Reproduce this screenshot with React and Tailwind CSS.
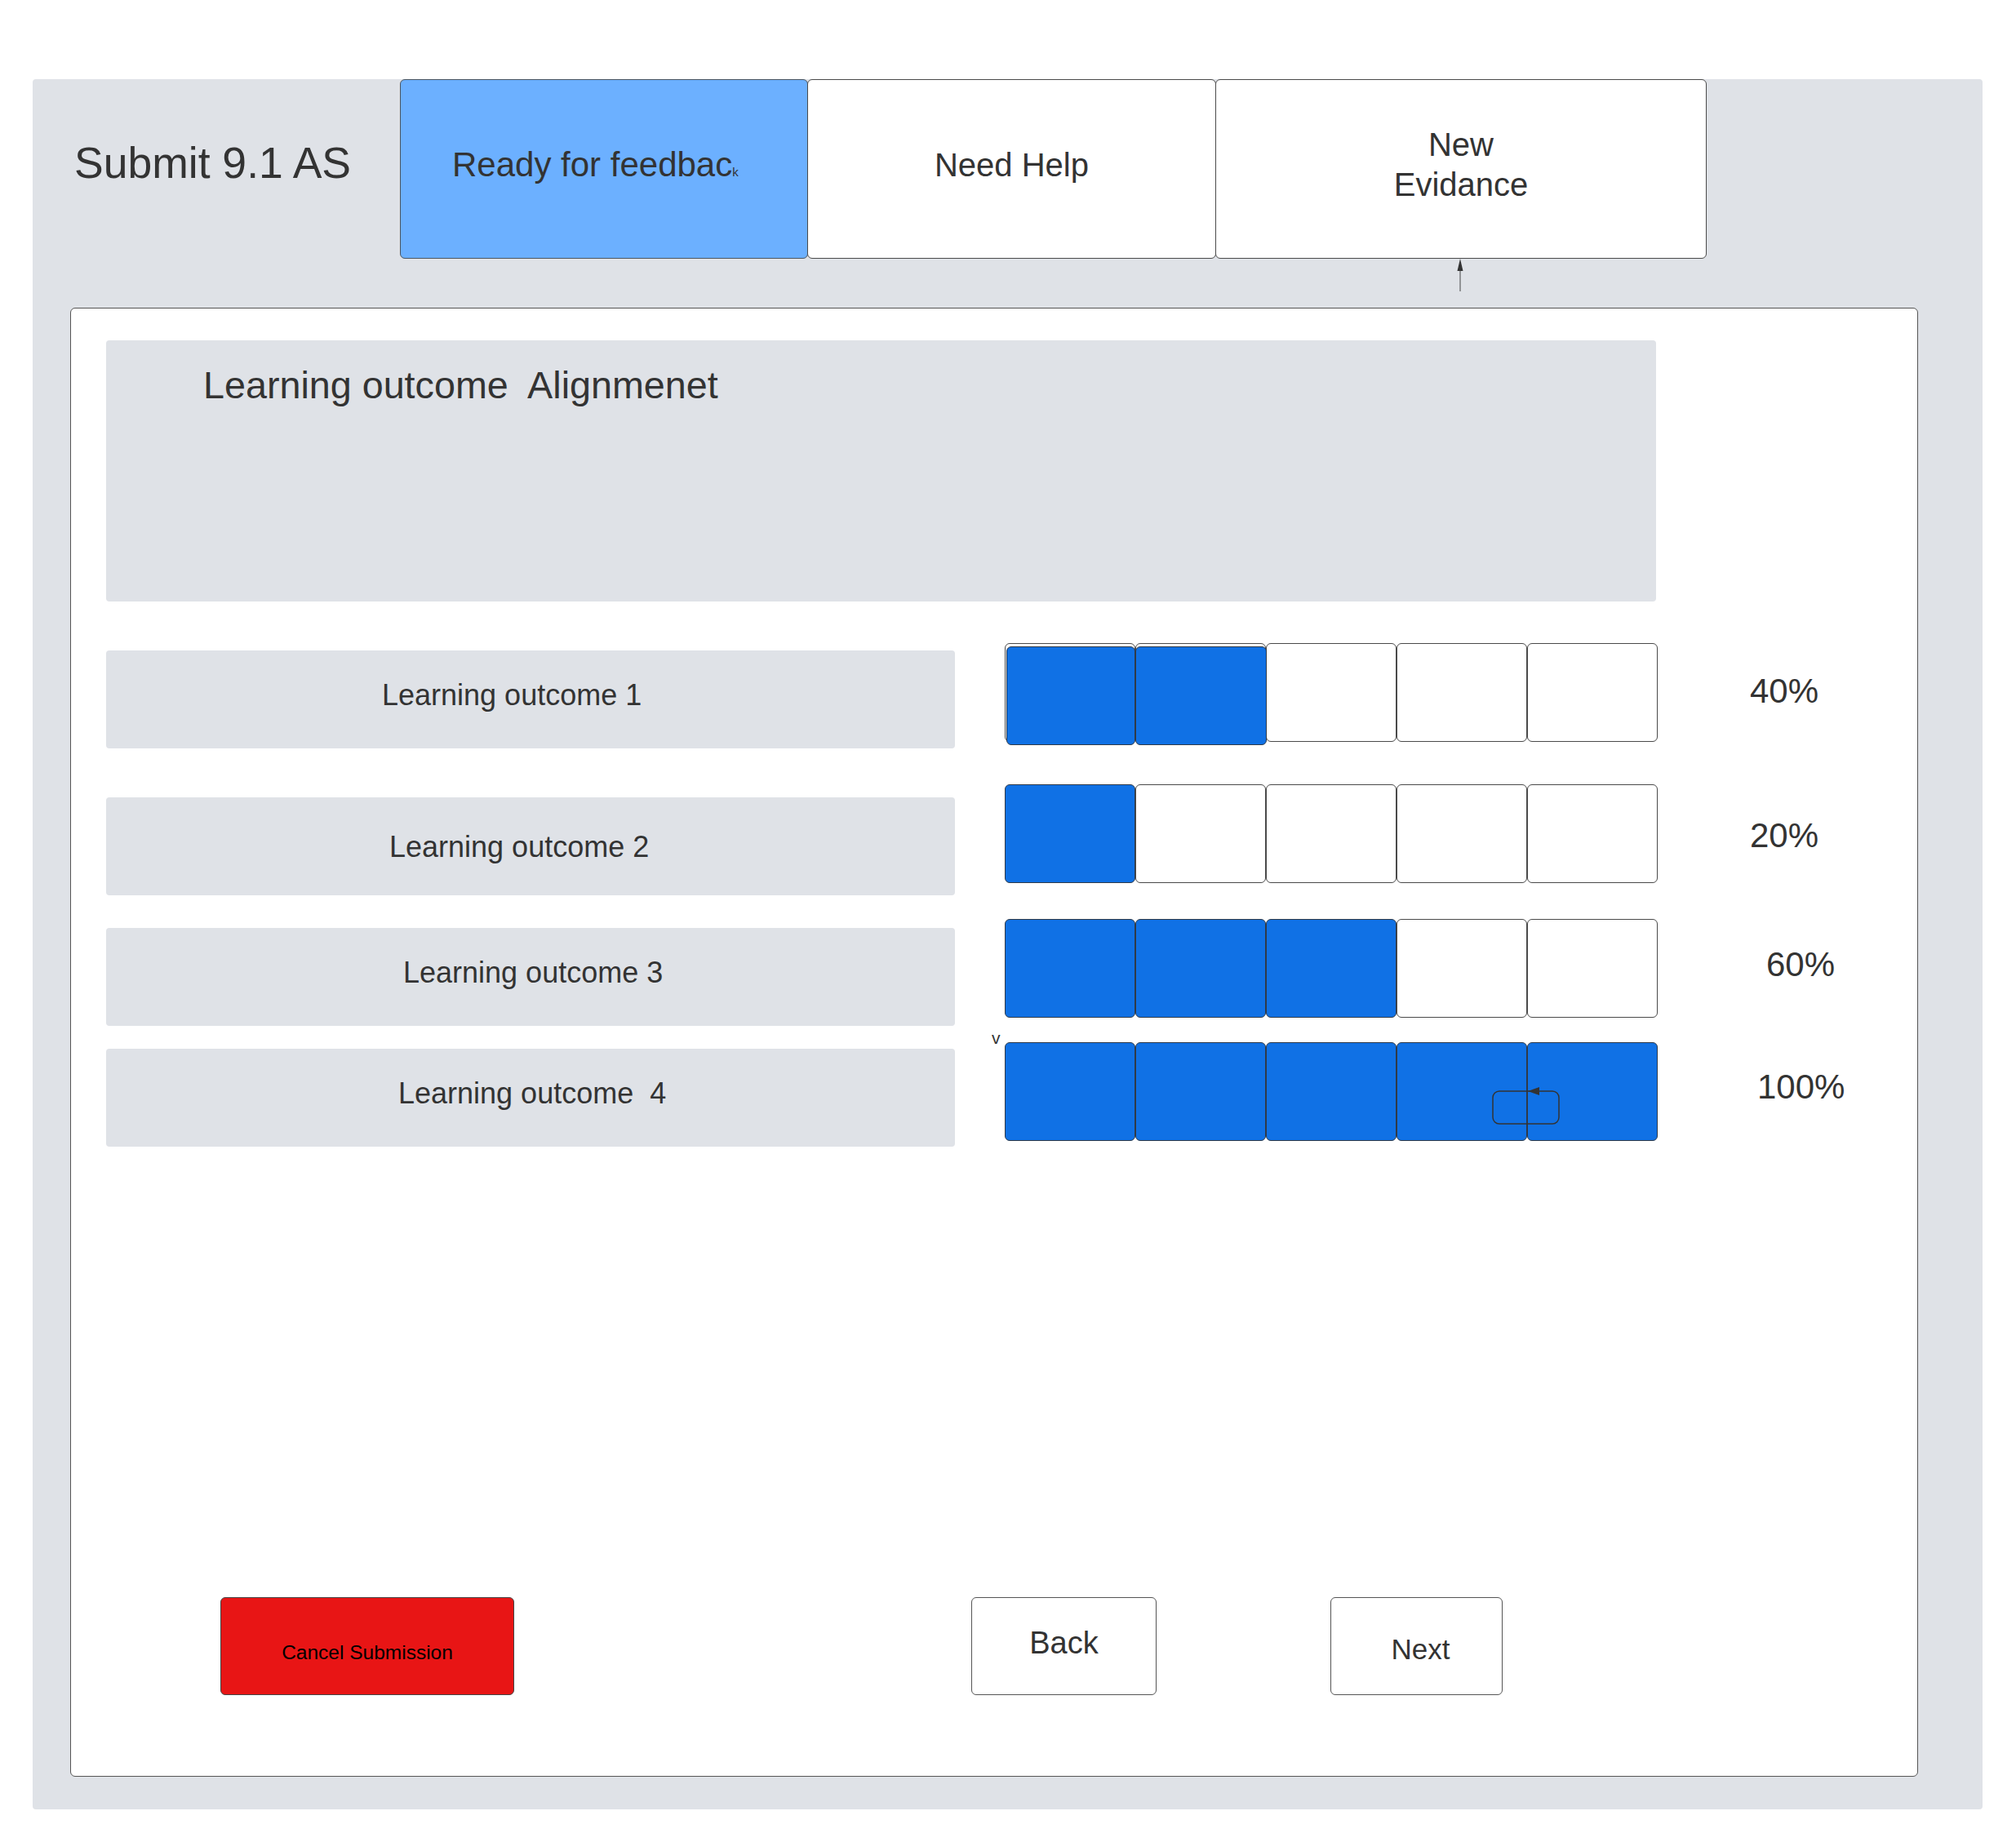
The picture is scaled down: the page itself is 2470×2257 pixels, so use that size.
import React from 'react';

const rows = [
    { label: 'Learning outcome 1', filled: 2, pct: '40%', rowMt: 'mt-[51px]', labelMt: 'mt-[9px]', textPad: 'pt-[37px] pl-[338px]', pctPos: 'ml-[113px] mt-[38px]', shifted: true },
    { label: 'Learning outcome 2', filled: 1, pct: '20%', rowMt: 'mt-[52px]', labelMt: 'mt-[16px]', textPad: 'pt-[43px] pl-[347px]', pctPos: 'ml-[113px] mt-[42px]' },
    { label: 'Learning outcome 3', filled: 3, pct: '60%', rowMt: 'mt-[44px]', labelMt: 'mt-[11px]', textPad: 'pt-[37px] pl-[364px]', pctPos: 'ml-[133px] mt-[35px]' },
    { label: 'Learning outcome  4', filled: 5, pct: '100%', rowMt: 'mt-[30px]', labelMt: 'mt-[8px]', textPad: 'pt-[37px] pl-[358px]', pctPos: 'ml-[122px] mt-[34px]', loop: true },
];

const Segment = ({ on }) => (
    <div
        className={`w-[160px] h-[121px] rounded-[6px] border ${on ? 'bg-[#1071e5] border-[#2f3a48]' : 'bg-white border-[#4a4a4a]'}`}
    />
);

const ProgressBar = ({ filled, shifted, loop }) => (
    <div className="relative flex ml-[61px]">
        {[0, 1, 2, 3, 4].map((i) => (
            <Segment key={i} on={!shifted && i < filled} />
        ))}
        {shifted && (
            <>
                <div className="absolute left-[2px] top-[4px] w-[158px] h-[121px] rounded-[6px] border border-[#2f3a48] bg-[#1071e5]" />
                <div className="absolute left-[160px] top-[4px] w-[161px] h-[121px] rounded-[6px] border border-[#2f3a48] bg-[#1071e5]" />
            </>
        )}
        {loop && (
            <>
                <span className="absolute left-[-16px] top-[-16px] text-[21px] leading-none">v</span>
                <svg className="absolute left-[597px] top-[54px]" width="86" height="50" viewBox="0 0 86 50">
                    <rect x="1" y="6" width="81" height="40" rx="8" fill="none" stroke="#333" strokeWidth="1.5" />
                    <polygon points="44,6 58,1 58,11" fill="#333" />
                </svg>
            </>
        )}
    </div>
);

const App = () => {
    return (
        <div className="min-h-screen w-full bg-white pt-[97px] pl-[40px] pb-[40px] font-['Liberation_Sans',Arial,sans-serif] text-[#333333]">
            <div className="w-[2389px] h-[2120px] bg-[#dfe2e7] rounded-[4px] flex flex-col">
                {/* top bar with title and tabs */}
                <div className="flex h-[220px]">
                    <div className="w-[450px] pl-[51px] pt-[76px] text-[53.5px] leading-none whitespace-nowrap">
                        Submit 9.1 AS
                    </div>
                    <div className="w-[500px] h-[220px] rounded-[6px] border border-[#4a5560] bg-[#6cb0ff] pl-[63px] pt-[83px] text-[42px] leading-none whitespace-nowrap">
                        Ready for feedbac<span className="text-[15px]">k</span>
                    </div>
                    <div className="-ml-px w-[501px] h-[220px] rounded-[6px] border border-[#4a4a4a] bg-white pt-[84px] text-center text-[40px] leading-none">
                        Need Help
                    </div>
                    <div className="-ml-px w-[602px] h-[220px] rounded-[6px] border border-[#4a4a4a] bg-white pt-[59px] text-center text-[40px]">
                        <div className="leading-none">New</div>
                        <div className="leading-none mt-[9px]">Evidance</div>
                    </div>
                </div>

                {/* connector arrow */}
                <div className="h-[60px] pl-[1741px]">
                    <svg width="16" height="60" viewBox="0 0 16 60">
                        <line x1="8" y1="10" x2="8" y2="40" stroke="#444" strokeWidth="1" />
                        <polygon points="8,0 4.5,15 11.5,15" fill="#333" />
                    </svg>
                </div>

                {/* main panel */}
                <div className="ml-[46px] w-[2264px] h-[1800px] bg-white border border-[#555] rounded-[6px] flex flex-col pl-[43px] pt-[39px] pb-[99px]">
                    <div className="w-[1899px] h-[320px] bg-[#dfe2e7] rounded-[4px] pl-[119px] pt-[32px] text-[46.7px] leading-none whitespace-pre">
                        {'Learning outcome  Alignmenet'}
                    </div>

                    {rows.map((r) => (
                        <div key={r.label} className={`flex items-start h-[121px] ${r.rowMt}`}>
                            <div className={`shrink-0 w-[1040px] h-[120px] bg-[#dfe2e7] rounded-[4px] text-[36px] leading-none whitespace-pre ${r.labelMt} ${r.textPad}`}>
                                {r.label}
                            </div>
                            <ProgressBar filled={r.filled} shifted={r.shifted} loop={r.loop} />
                            <div className={`text-[42px] leading-none ${r.pctPos}`}>{r.pct}</div>
                        </div>
                    ))}

                    <div className="mt-auto flex">
                        <button className="ml-[140px] w-[360px] h-[120px] rounded-[6px] border border-[#444] bg-[#e81515] pt-[55px] text-[24.5px] leading-none text-black flex justify-center items-start">
                            Cancel Submission
                        </button>
                        <button className="ml-[560px] w-[227px] h-[120px] rounded-[6px] border border-[#555] bg-white pt-[36px] text-[38px] leading-none flex justify-center items-start">
                            Back
                        </button>
                        <button className="ml-[213px] w-[211px] h-[120px] rounded-[6px] border border-[#555] bg-white pt-[45px] pl-[10px] text-[35px] leading-none flex justify-center items-start">
                            Next
                        </button>
                    </div>
                </div>
            </div>
        </div>
    );
};

export default App;
